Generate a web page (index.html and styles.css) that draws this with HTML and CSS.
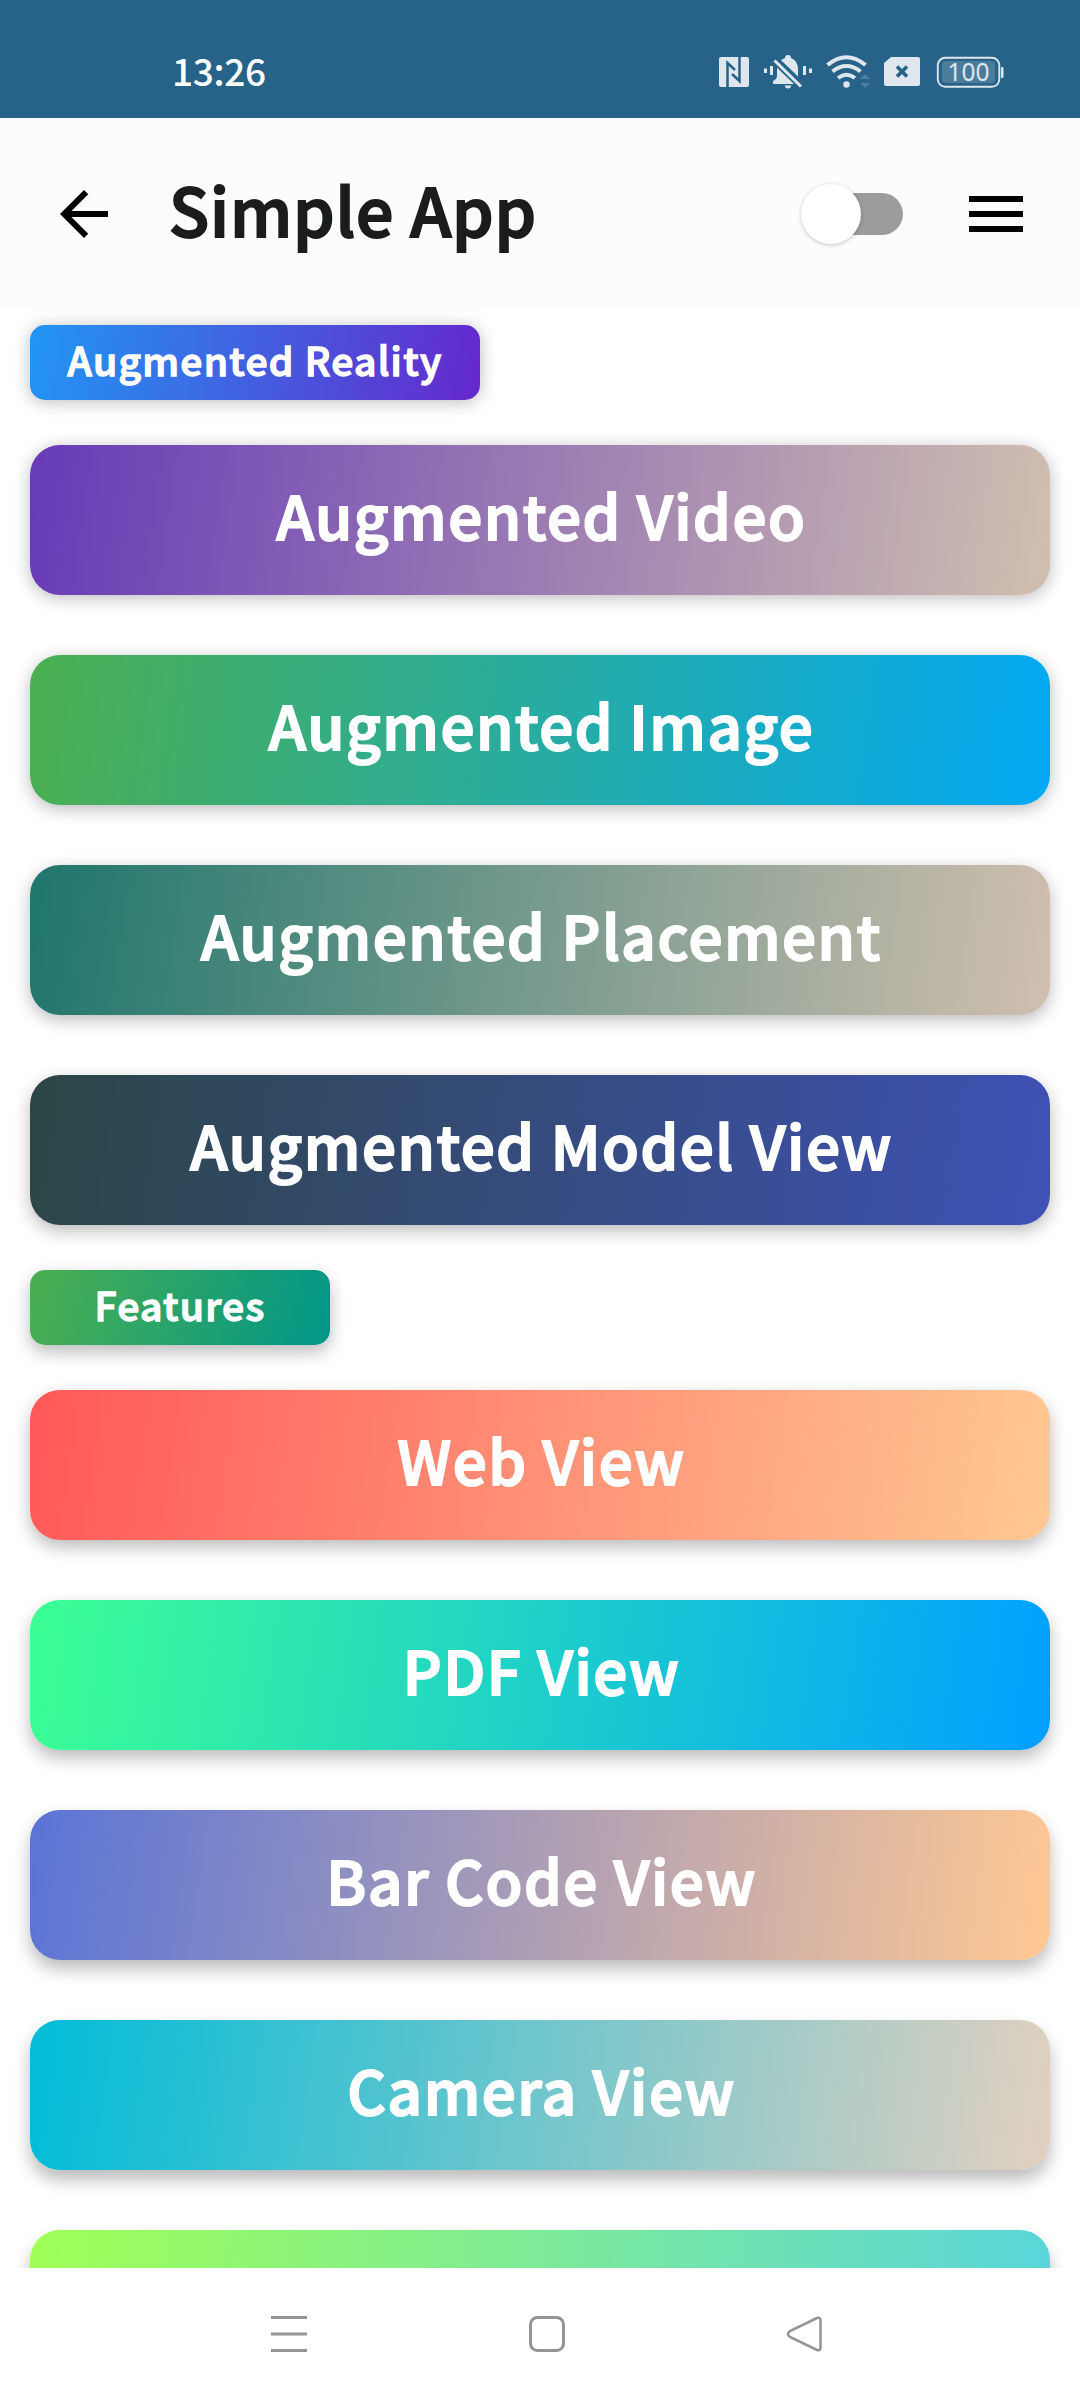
FILE: index.html
```html
<!DOCTYPE html>
<html lang="en">
<head>
<meta charset="utf-8">
<title>Simple App</title>
<link rel="stylesheet" href="styles.css">
</head>
<body>
<div class="screen">
  <div class="status">
    <span class="clock">13:26</span>
    <svg class="status-icons" width="320" height="70" viewBox="0 0 320 70">
      <g fill="#dee7ee">
        <rect x="19" y="17" width="30" height="30" rx="2"/>
        <path d="M64 28.500h3v4.500h-3zM70 26h3v9h-3zM103 26h3v9h-3zM109 28.500h3v4.500h-3z"/>
        <path d="M73 44v-3q4-2 4-5v-7q0-8 8-11q0-3 3-3t3 3q7 3 7 11v7q0 3 4 5v3z"/>
        <path d="M84.500 45.500h7q-1 3-3.500 3t-3.500-3z"/>
        <path d="M184 23l7-6h27a2 2 0 0 1 2 2v25a2 2 0 0 1-2 2h-32a2 2 0 0 1-2-2z"/>
        <circle cx="146.500" cy="44.500" r="3.200"/>
        <rect x="301" y="27" width="2.500" height="11" rx="1"/>
      </g>
      <g fill="none" stroke="#276389">
        <path d="M27.500 47V23l7.500 7M39.500 17v24l-7.500-7" stroke-width="2.500"/>
        <path d="M74 19l29 28" stroke-width="8"/>
        <path d="M197 26.500l10 10M207 26.500l-10 10" stroke-width="3.600"/>
      </g>
      <path d="M74.500 20.500l26.500 26" stroke="#dee7ee" stroke-width="3" fill="none"/>
      <g fill="none" stroke="#dee7ee" stroke-width="4">
        <path d="M127.500 25q19-15.500 38 0M132.500 31.500q14-11 28 0M138 38q8.500-6.500 17 0"/>
      </g>
      <path d="M160 39l5-5 5 5zM160 43l5 5 5-5z" fill="#4b7d9f"/>
      <rect x="237.800" y="17.800" width="61.500" height="29" rx="7.500" fill="none" stroke="#dee7ee" stroke-width="1.900"/>
      <rect x="242" y="21" width="53" height="22" rx="4" fill="#4b7c9c"/>
      <text class="battery" x="268.500" y="41" text-anchor="middle">100</text>
    </svg>
  </div>
  <header class="appbar">
    <svg class="back" width="48" height="48" viewBox="4 4 16 16"><path d="M20 11H7.830l5.590-5.590L12 4l-8 8 8 8 1.410-1.410L7.830 13H20z"/></svg>
    <h1 class="title">Simple App</h1>
    <div class="toggle"><span class="knob"></span></div>
    <div class="menu"><i></i><i></i><i></i></div>
  </header>
  <main class="list">
    <div class="badge ar">Augmented Reality</div>
    <div class="card video">Augmented Video</div>
    <div class="card image">Augmented Image</div>
    <div class="card placement">Augmented Placement</div>
    <div class="card model">Augmented Model View</div>
    <div class="badge features">Features</div>
    <div class="card web">Web View</div>
    <div class="card pdf">PDF View</div>
    <div class="card barcode">Bar Code View</div>
    <div class="card camera">Camera View</div>
    <div class="card next"></div>
  </main>
  <nav class="nav">
    <svg width="1080" height="132" viewBox="0 0 1080 132" fill="none" stroke="#949494" stroke-width="3">
      <path d="M271 49.500h36M271 66h36M271 82.500h36"/>
      <rect x="530.500" y="49.500" width="33" height="33" rx="7"/>
      <path d="M817 50 L790 63 Q786 66 790 69 L817 82 Q820.500 83 820.500 80 V52 Q820.500 49 817 50z" stroke-width="2.500"/>
    </svg>
  </nav>
</div>
</body>
</html>
```
FILE: styles.css
```css
* { box-sizing: border-box; }
body { margin: 0; background: #fff; font-family: "Noto Sans CJK SC", sans-serif; }
.screen { width: 1080px; height: 2400px; display: flex; flex-direction: column; overflow: hidden; }
.status { height: 118px; background: #276389; display: flex; justify-content: space-between; padding: 40px 60px 0 172px; }
.clock { font: 500 37px/61px "Noto Sans CJK SC", sans-serif; color: #fff; letter-spacing: -.3px; }
.battery { font: 400 24.500px "Noto Sans", sans-serif; fill: #dee7ee; }
.appbar { height: 192px; background: #fcfcff; display: flex; align-items: center; padding: 0 57px 0 60px; }
.title { margin: 0 0 0 61px; padding-bottom: 12px; font-size: 66px; line-height: 100px; font-weight: 500; letter-spacing: .9px; color: #1b1c1e; -webkit-text-stroke: 2px #1b1c1e; flex: 1; }
.toggle { width: 102px; height: 42px; display: flex; align-items: center; border-radius: 21px; background: linear-gradient(90deg, transparent 30px, #9c9c9e 30px); }
.knob { width: 60px; height: 60px; flex: none; border-radius: 50%; background: #fff; box-shadow: 0 1px 4px rgba(0,0,0,.22); }
.menu { width: 54px; margin-left: 66px; display: grid; gap: 9px; }
.menu i { height: 6px; background: #000; }
.list { height: 1958px; padding: 15px 30px 0; overflow: hidden; display: flex; flex-direction: column; align-items: flex-start; }
.card, .badge { --drop: 4px; flex: none; color: #fff; font-weight: 500; display: flex; align-items: center; justify-content: center; box-shadow: 0 var(--drop) 17px rgba(0,0,0,.27); }
.card { width: 1020px; height: 150px; padding: 0 0 14px 3px; margin-bottom: 60px; border-radius: 30px; font-size: 60px; letter-spacing: 1.560px; -webkit-text-stroke: 2px #fff; }
.badge { height: 75px; padding-bottom: 8px; border-radius: 15px; margin-bottom: 45px; font-size: 39px; letter-spacing: 1.300px; -webkit-text-stroke: 1.400px #fff; }
.ar { --drop: 2px; width: 450px; background: linear-gradient(99.460deg, #2196f3, #6528cc); }
.video { --drop: 3px; background: linear-gradient(98.370deg, #673ab7, #d0bfaf); }
.image { background: linear-gradient(98.370deg, #4caf50, #03a9f4); }
.placement { --drop: 5px; background: linear-gradient(98.370deg, #1f766c, #d0bfaf); }
.model { --drop: 6px; background: linear-gradient(98.370deg, #2c4646, #3f51b5); margin-bottom: 45px; }
.features { --drop: 7px; width: 300px; background: linear-gradient(104.040deg, #4caf50, #009688); }
.web { --drop: 7px; background: linear-gradient(98.370deg, #ff5858, #ffc893); }
.pdf { --drop: 8px; background: linear-gradient(98.370deg, #3cff94, #009fff); }
.barcode { --drop: 9px; background: linear-gradient(98.370deg, #5a74d6, #ffc893); }
.camera { --drop: 10px; background: linear-gradient(98.370deg, #00bcd8, #e2d0c0); }
.next { --drop: 10px; background: linear-gradient(98.370deg, #a0ff55, #58d5dc); }
.nav { height: 132px; background: #fff; }
```
